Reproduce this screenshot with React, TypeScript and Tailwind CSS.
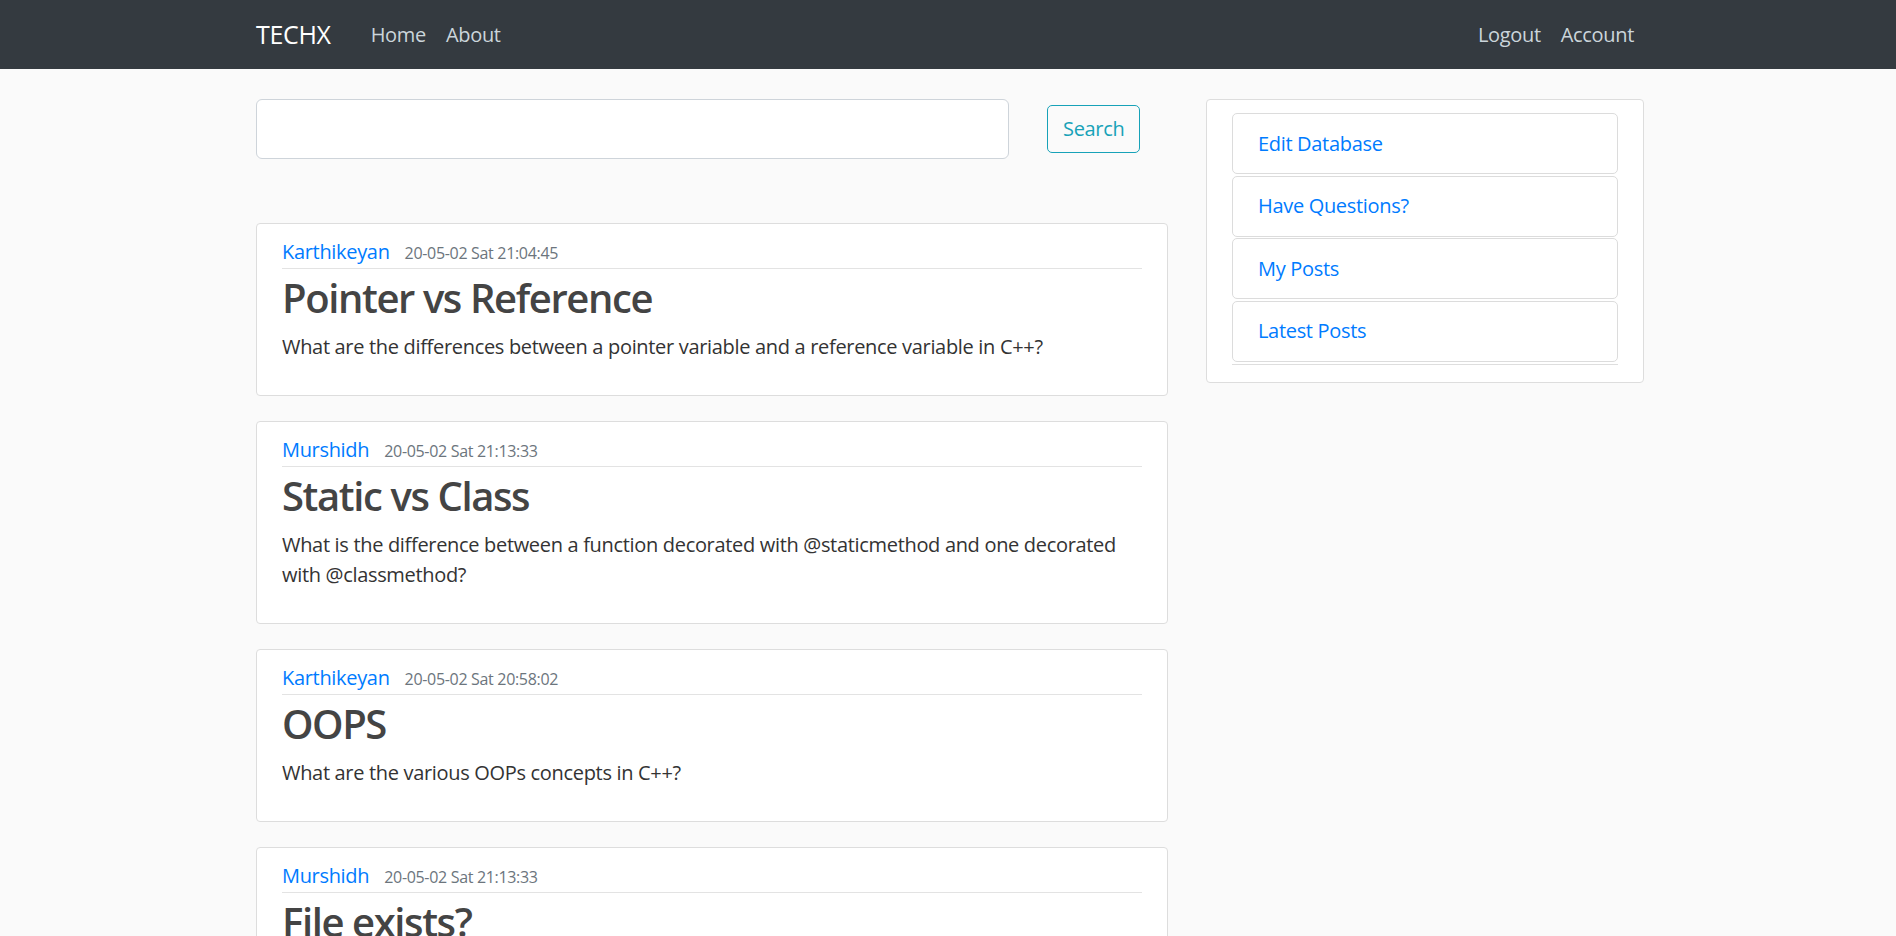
const posts = [
  {
    author: "Karthikeyan",
    date: "20-05-02 Sat 21:04:45",
    title: "Pointer vs Reference",
    content:
      "What are the differences between a pointer variable and a reference variable in C++?",
  },
  {
    author: "Murshidh",
    date: "20-05-02 Sat 21:13:33",
    title: "Static vs Class",
    content:
      "What is the difference between a function decorated with @staticmethod and one decorated with @classmethod?",
  },
  {
    author: "Karthikeyan",
    date: "20-05-02 Sat 20:58:02",
    title: "OOPS",
    content: "What are the various OOPs concepts in C++?",
  },
  {
    author: "Murshidh",
    date: "20-05-02 Sat 21:13:33",
    title: "File exists?",
    content: "How do I check whether a file exists without using the try statement?",
  },
];

const sideLinks = ["Edit Database", "Have Questions?", "My Posts", "Latest Posts"];

export default function App() {
  return (
    <div className="h-screen overflow-hidden bg-[#fafafa] text-[#333333] tracking-[-0.02em] font-['Open_Sans','Noto_Sans',sans-serif]">
      <nav className="h-[69px] bg-[#343a40]">
        <div className="w-[1392px] mx-auto pl-[4px] h-full flex items-center">
          <a href="#" className="text-[25px] leading-[37px] text-white mr-[30px]">
            TECHX
          </a>
          <a href="#" className="px-[10px] text-[20px] leading-[30px] text-[#cbd5db]">
            Home
          </a>
          <a href="#" className="px-[10px] text-[20px] leading-[30px] text-[#cbd5db]">
            About
          </a>
          <div className="ml-auto flex">
            <a href="#" className="px-[10px] text-[20px] leading-[30px] text-[#cbd5db]">
              Logout
            </a>
            <a href="#" className="px-[10px] text-[20px] leading-[30px] text-[#cbd5db]">
              Account
            </a>
          </div>
        </div>
      </nav>

      <main className="w-[1392px] mx-auto pl-[4px] pt-[30px] flex items-start gap-[38px]">
        <div className="w-[912px]">
          <form className="flex items-center" onSubmit={(e) => e.preventDefault()}>
            <input
              type="text"
              className="w-[753px] h-[60px] bg-white border border-[#ced4da] rounded-[6px] px-[20px] text-[25px] outline-none"
            />
            <button
              type="submit"
              className="ml-[38px] h-[48px] px-[15px] border border-[#17a2b8] rounded-[5px] text-[20px] text-[#17a2b8]"
            >
              Search
            </button>
          </form>

          <div className="mt-[64px]">
            {posts.map((post, i) => (
              <article
                key={i}
                className="bg-white border border-[#dddddd] rounded-[4px] px-[25px] pt-[13px] pb-[13px] mb-[25px]"
              >
                <div className="flex items-baseline border-b border-[#e3e3e3] pb-[1px] mb-[5px]">
                  <a href="#" className="text-[20px] leading-[30px] text-[#007bff]">
                    {post.author}
                  </a>
                  <small className="ml-[15px] text-[16px] text-[#6c757d]">{post.date}</small>
                </div>
                <h2 className="text-[40px] leading-[48px] font-semibold tracking-[-0.035em] text-[#444444] mb-[10px]">
                  {post.title}
                </h2>
                <p className="text-[20px] leading-[30px] mb-[20px]">{post.content}</p>
              </article>
            ))}
          </div>
        </div>

        <aside className="w-[438px] bg-white border border-[#dddddd] rounded-[4px] px-[25px] pt-[13px] pb-[17px]">
          <ul className="flex flex-col gap-[1.5px]">
            {sideLinks.map((label) => (
              <li
                key={label}
                className="h-[61px] flex items-center px-[25px] border border-[#dcdcdc] rounded-[5px] text-[20px] text-[#007bff]"
              >
                {label}
              </li>
            ))}
          </ul>
          <div className="mt-[2px] h-px bg-[#dedede]" />
        </aside>
      </main>
    </div>
  );
}
